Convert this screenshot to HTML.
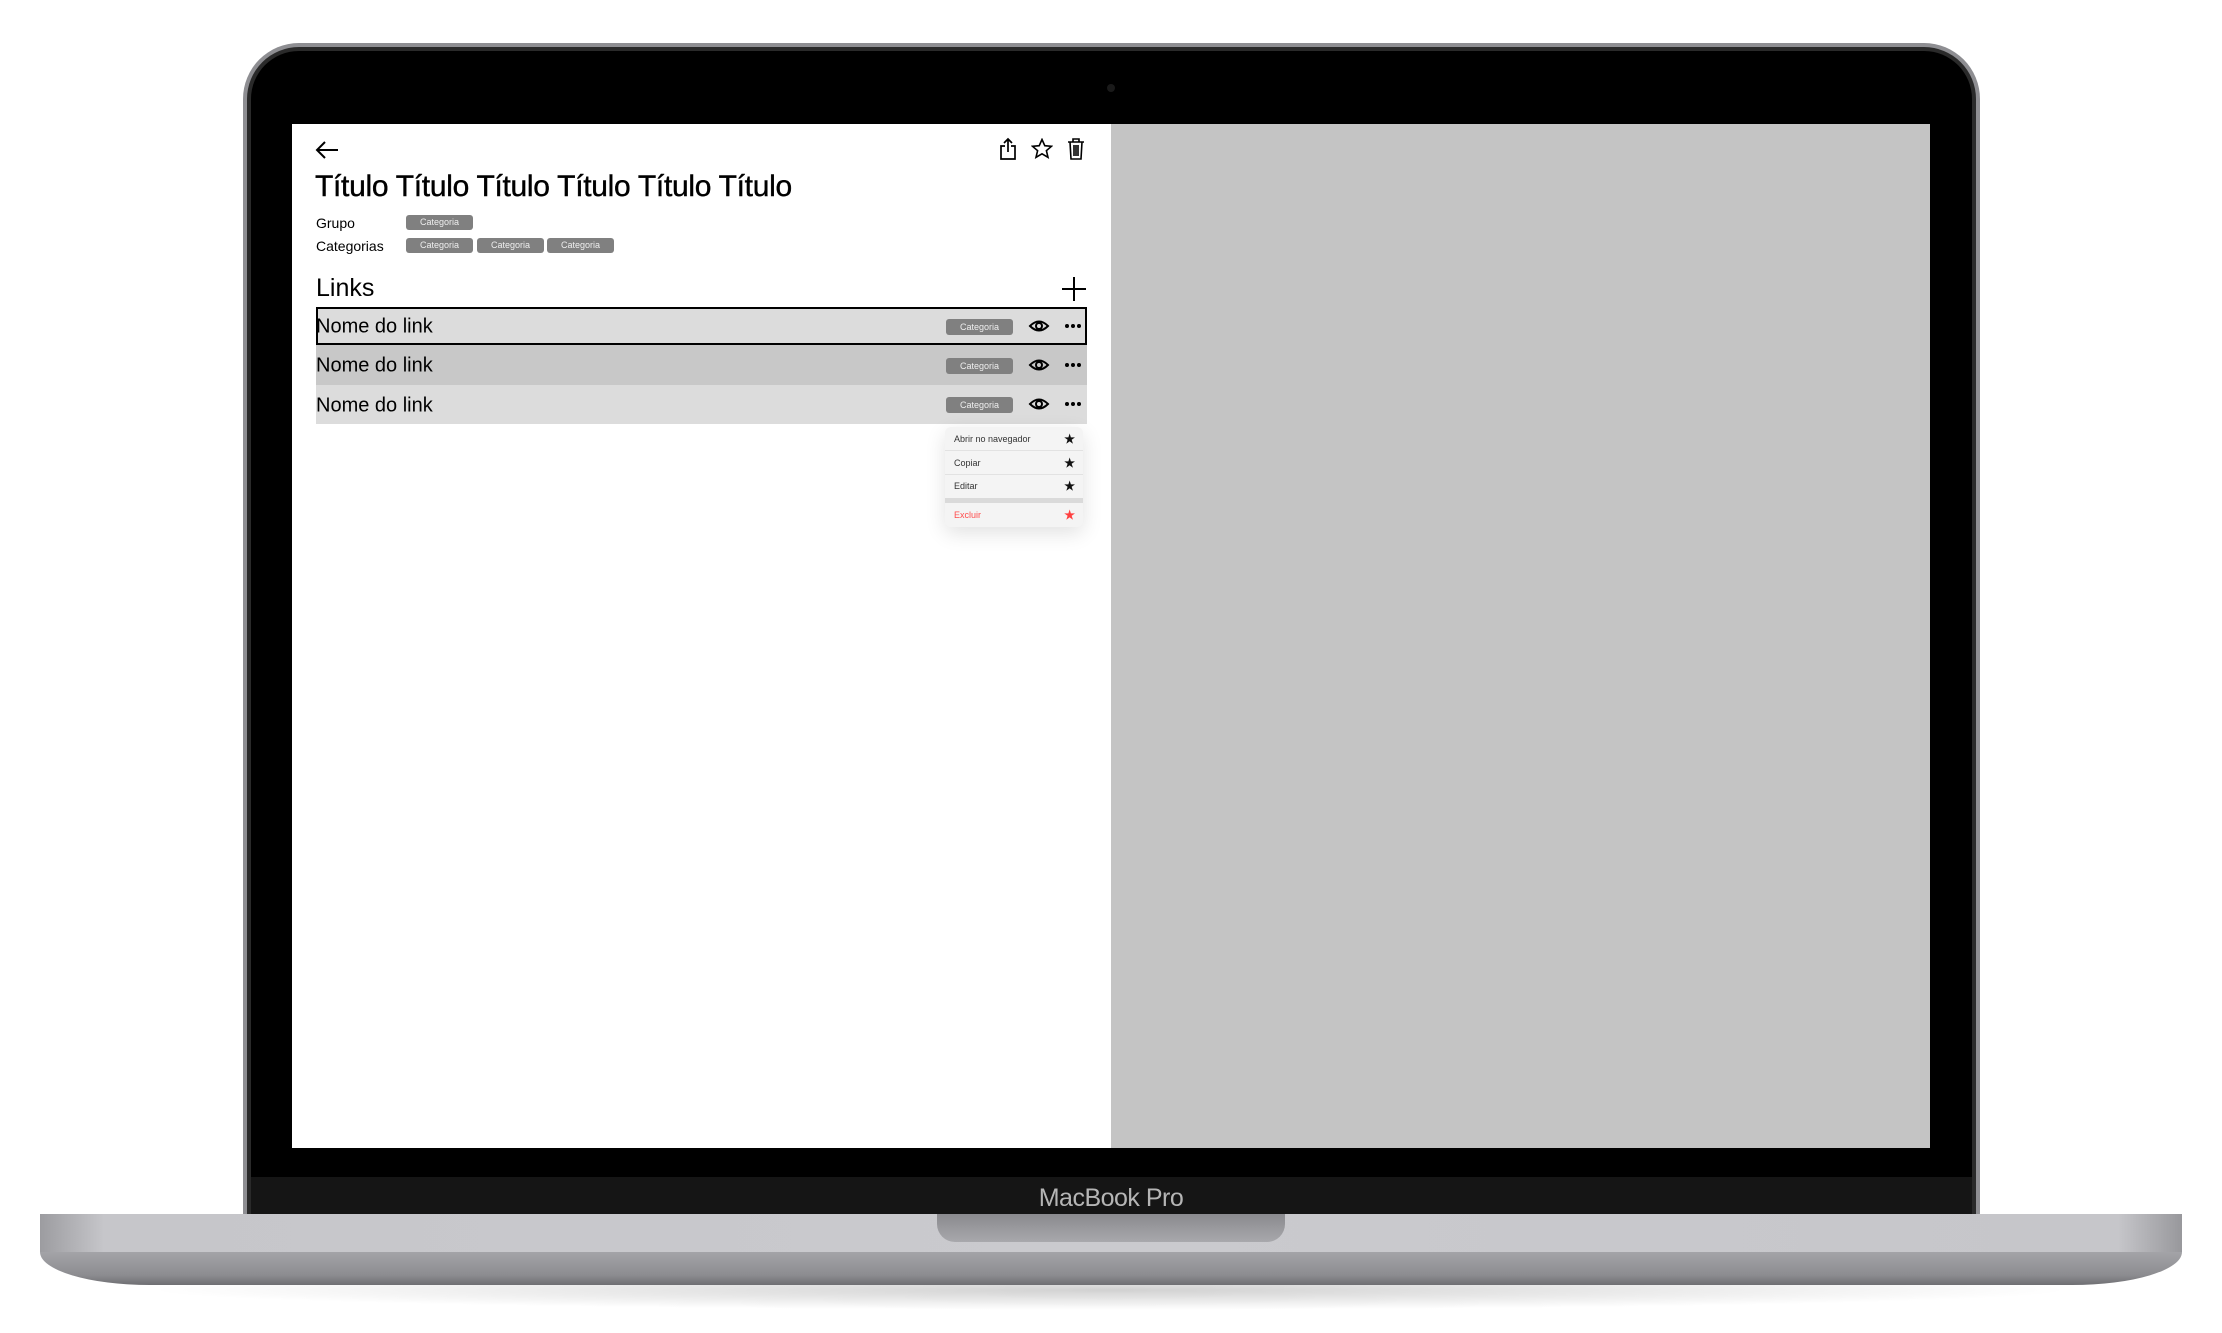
<!DOCTYPE html>
<html><head><meta charset="utf-8">
<style>
*{margin:0;padding:0;box-sizing:border-box}
body{width:2222px;height:1333px;background:#fff;position:relative;overflow:hidden;font-family:"Liberation Sans",sans-serif}
.abs{position:absolute}
.chip{position:absolute;background:#808080;color:#eee;font-size:9px;border-radius:3px;height:15px;line-height:15px;text-align:center;width:67px}
.row{position:absolute;left:316px;width:771px;font-size:20px;color:#000}
.row span.t{position:absolute;left:0;top:50%;transform:translateY(-45%)}
.mi{position:absolute;left:0;width:138px;height:24px;font-size:9px;color:#333;padding-left:9px;line-height:24px;border-bottom:1px solid #e2e2e2}
.mi b{position:absolute;right:8px;top:0;font-size:12px;color:#111}
</style></head><body>
<div class="abs" style="left:140px;top:1270px;width:1940px;height:40px;border-radius:50%;background:radial-gradient(ellipse at center,rgba(0,0,0,.18),rgba(0,0,0,0) 70%)"></div>
<div class="abs" style="left:243px;top:43px;width:1737px;height:1180px;border-radius:56px 56px 0 0;background:#8e8e92"></div>
<div class="abs" style="left:247px;top:47px;width:1729px;height:1176px;border-radius:52px 52px 0 0;background:#2a2a2a"></div>
<div class="abs" style="left:251px;top:51px;width:1721px;height:1172px;border-radius:48px 48px 0 0;background:#000"></div>
<div class="abs" style="left:251px;top:1177px;width:1721px;height:40px;background:#151515"></div>
<div class="abs" style="left:0;top:1184px;width:2222px;text-align:center;color:#b5b5b5;font-size:25px;letter-spacing:-0.5px">MacBook Pro</div>
<div class="abs" style="left:1107px;top:84px;width:8px;height:8px;border-radius:50%;background:#1a1a1a"></div>
<div class="abs" style="left:40px;top:1214px;width:2142px;height:38px;background:linear-gradient(90deg,#9c9ca0,#c6c6ca 3%,#cacace 50%,#c6c6ca 97%,#98989c)"></div>
<div class="abs" style="left:40px;top:1252px;width:2142px;height:33px;border-radius:0 0 110px 110px/0 0 33px 33px;background:linear-gradient(#a4a4a8,#8c8c90 70%,#6e6e72)"></div>
<div class="abs" style="left:937px;top:1214px;width:348px;height:28px;border-radius:0 0 18px 18px;background:linear-gradient(#8a8a8e,#a8a8ac)"></div>
<div class="abs" style="left:292px;top:124px;width:819px;height:1024px;background:#fff"></div>
<div class="abs" style="left:1111px;top:124px;width:819px;height:1024px;background:#c4c4c4"></div>
<svg class="abs" style="left:314px;top:140px" width="26" height="20" viewBox="0 0 26 20"><path d="M24 10H3M11 2L3 10l8 8" stroke="#000" stroke-width="2" fill="none"/></svg>
<svg class="abs" style="left:998px;top:137px" width="20" height="24" viewBox="0 0 20 24"><path d="M7 9H3v13h14V9h-4M10 15V2M6 6l4-4 4 4" stroke="#000" stroke-width="1.7" fill="none"/></svg>
<svg class="abs" style="left:1031px;top:138px" width="22" height="22" viewBox="0 0 22 22"><path d="M11 1.5l2.8 6.2 6.7.6-5.1 4.4 1.6 6.6L11 15.8l-6 3.5 1.6-6.6L1.5 8.3l6.7-.6z" stroke="#000" stroke-width="1.6" fill="none"/></svg>
<svg class="abs" style="left:1067px;top:137px" width="18" height="24" viewBox="0 0 18 24"><path d="M1 5h16M6 5V2h6v3M3 5l1 17h10l1-17M7 8v11M9 8v11M11 8v11" stroke="#000" stroke-width="1.6" fill="none"/></svg>
<div class="abs" style="left:315px;top:170px;font-size:30px;color:#000;letter-spacing:-0.3px;-webkit-text-stroke:0.4px #000">Título Título Título Título Título Título</div>
<div class="abs" style="left:316px;top:215px;font-size:14px">Grupo</div>
<div class="abs" style="left:316px;top:238px;font-size:14px">Categorias</div>
<div class="chip" style="left:406px;top:215px">Categoria</div>
<div class="chip" style="left:406px;top:238px">Categoria</div>
<div class="chip" style="left:477px;top:238px">Categoria</div>
<div class="chip" style="left:547px;top:238px">Categoria</div>
<div class="abs" style="left:316px;top:274px;font-size:25px">Links</div>
<svg class="abs" style="left:1062px;top:277px" width="24" height="24" viewBox="0 0 24 24"><path d="M12 0v24M0 12h24" stroke="#000" stroke-width="2"/></svg>
<div class="row" style="top:307px;height:38px;background:#dcdcdc;border:2px solid #000"><span class="t" style="left:-2px">Nome do link</span></div>
<div class="row" style="top:345px;height:40px;background:#c8c8c8"><span class="t">Nome do link</span></div>
<div class="row" style="top:385px;height:39px;background:#dcdcdc"><span class="t">Nome do link</span></div>
<div class="chip" style="left:946px;top:319px;height:16px;line-height:16px">Categoria</div>
<div class="chip" style="left:946px;top:358px;height:16px;line-height:16px">Categoria</div>
<div class="chip" style="left:946px;top:397px;height:16px;line-height:16px">Categoria</div>
<svg class="abs" style="left:1028px;top:318px" width="22" height="110" viewBox="0 0 22 110">
<g fill="none" stroke="#000" stroke-width="2"><path d="M2 8q9-9 18 0q-9 9-18 0z"/><circle cx="11" cy="8" r="3"/>
<path d="M2 47q9-9 18 0q-9 9-18 0z"/><circle cx="11" cy="47" r="3"/>
<path d="M2 86q9-9 18 0q-9 9-18 0z"/><circle cx="11" cy="86" r="3"/></g></svg>
<svg class="abs" style="left:1064px;top:318px" width="20" height="110" viewBox="0 0 20 110" fill="#000">
<circle cx="3" cy="8" r="2"/><circle cx="9" cy="8" r="2"/><circle cx="15" cy="8" r="2"/>
<circle cx="3" cy="47" r="2"/><circle cx="9" cy="47" r="2"/><circle cx="15" cy="47" r="2"/>
<circle cx="3" cy="86" r="2"/><circle cx="9" cy="86" r="2"/><circle cx="15" cy="86" r="2"/></svg>
<div class="abs" style="left:945px;top:427px;width:138px;height:100px;background:#f4f4f4;border-radius:6px;box-shadow:0 6px 20px rgba(0,0,0,.12);overflow:hidden">
<div class="mi" style="top:0">Abrir no navegador<b>★</b></div>
<div class="mi" style="top:24px">Copiar<b>★</b></div>
<div class="mi" style="top:48px;border-bottom:5px solid #dadada;height:28px;line-height:23px">Editar<b>★</b></div>
<div class="mi" style="top:76px;color:#ff4d4d;border:none">Excluir<b style="color:#ff4040">★</b></div>
</div>
</body></html>
